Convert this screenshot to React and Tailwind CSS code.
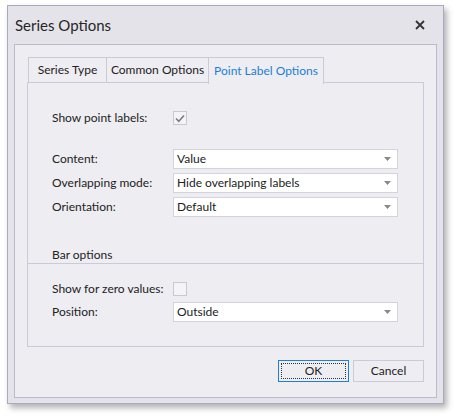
const font = { fontFamily: 'Lato, "Noto Sans", sans-serif' }

function Combo({ value }) {
  return (
    <div className="flex items-center justify-between w-[225px] h-[20px] bg-white border border-[#d3d3de] pl-[3px] pr-[6px] text-[12px] text-[#222]">
      <span className="leading-none">{value}</span>
      <svg width="7" height="4" viewBox="0 0 7 4">
        <path d="M0 0 L7 0 L3.5 4 Z" fill="#8a8a8a" />
      </svg>
    </div>
  )
}

function Check({ checked }) {
  return (
    <div className="w-[14px] h-[14px] bg-[#f4f4f7] border border-[#c9c9d6] flex items-center justify-center">
      {checked && (
        <svg width="10" height="9" viewBox="0 0 10 9">
          <path d="M1 4.5 L3.8 7.3 L9 1.5" stroke="#7d7d85" strokeWidth="1.6" fill="none" />
        </svg>
      )}
    </div>
  )
}

function Row({ label, children, className = '' }) {
  return (
    <div className={`flex items-center h-[20px] ${className}`}>
      <div className="w-[121px] text-[12px] text-[#222]">{label}</div>
      {children}
    </div>
  )
}

export default function App() {
  const tabs = ['Series Type', 'Common Options', 'Point Label Options']
  const widths = ['w-[79px]', 'w-[103px]', 'w-[116px]']
  return (
    <div className="w-[457px] h-[420px] bg-white pt-[5px] pl-[7px]" style={font}>
      <div className="w-[437px] h-[399px] border border-[#a9a9c3] bg-[#e4e3ea] flex flex-col shadow-[3px_4px_6px_rgba(0,0,0,0.3)]">
        <div className="h-[38px] flex items-center justify-between pl-[7px] pr-[18px]">
          <span className="text-[15px] text-[#262626] leading-none">Series Options</span>
          <svg width="10" height="10" viewBox="0 0 10 10">
            <path d="M1 1 L9 9 M9 1 L1 9" stroke="#333" strokeWidth="1.8" />
          </svg>
        </div>
        <div className="mx-[6px] h-[354px] border border-[#babace] bg-[#eeedf2] pt-[12px] pl-[12px] flex flex-col">
          <div className="flex ml-[1px] h-[26px] relative z-10">
            {tabs.map((t, i) => {
              const active = i === 2
              return (
                <div
                  key={t}
                  className={`${widths[i]} flex items-center justify-center text-[12px] border border-[#cacad8] ${
                    i > 0 ? '-ml-px' : ''
                  } ${active ? 'h-[27px] border-b-0 text-[#1a7fd8] bg-[#eeedf2]' : 'h-[26px] text-[#222]'}`}
                >
                  {t}
                </div>
              )
            })}
          </div>
          <div className="w-[397px] h-[265px] -mt-px border border-[#cacad8] flex flex-col">
            <Row label="Show point labels:" className="mt-[25px] pl-[24px]">
              <Check checked />
            </Row>
            <div className="mt-[21px] pl-[24px] flex flex-col gap-[4px]">
              <Row label="Content:">
                <Combo value="Value" />
              </Row>
              <Row label="Overlapping mode:">
                <Combo value="Hide overlapping labels" />
              </Row>
              <Row label="Orientation:">
                <Combo value="Default" />
              </Row>
            </div>
            <div className="mt-[29px] pl-[24px] h-[17px] text-[12px] text-[#222] flex items-center">Bar options</div>
            <div className="border-t border-[#cacad8]" />
            <Row label="Show for zero values:" className="mt-[15px] pl-[24px]">
              <Check />
            </Row>
            <Row label="Position:" className="mt-[3px] pl-[24px]">
              <Combo value="Outside" />
            </Row>
          </div>
          <div className="flex justify-end gap-[4px] mt-[13px] pr-[12px]">
            <div className="w-[71px] h-[22px] border border-[#1f7fd6] p-[2px]">
              <div className="w-full h-full border border-dotted border-[#333] flex items-center justify-center text-[12px] text-[#222]">
                OK
              </div>
            </div>
            <div className="w-[71px] h-[22px] border border-[#cacad8] flex items-center justify-center text-[12px] text-[#222]">
              Cancel
            </div>
          </div>
        </div>
      </div>
    </div>
  )
}
